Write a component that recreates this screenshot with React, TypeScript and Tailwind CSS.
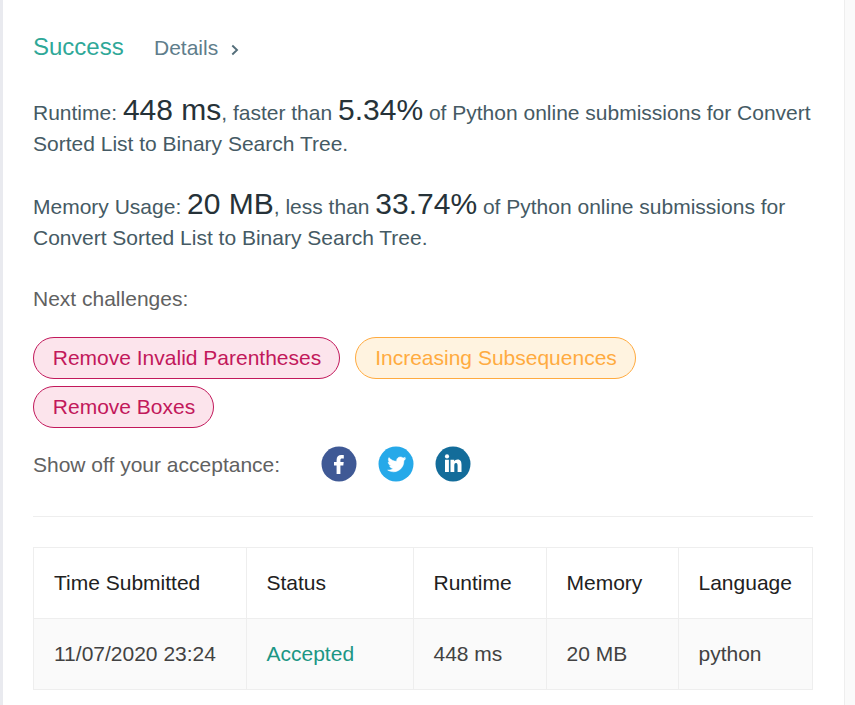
import React from "react";

const font = "font-['Liberation_Sans',Arial,sans-serif]";

function Strong({ children }: { children: React.ReactNode }) {
  return <span className="text-[30px] leading-[30px] text-[#263238]">{children}</span>;
}

function Facebook() {
  return (
    <svg width="36" height="36" viewBox="0 0 36 36">
      <circle cx="18" cy="18" r="17.5" fill="#3f5995" />
      <path d="M15.6 27.9v-8.4H13v-3.6h2.6v-1.8c0-3.3 1.8-5 4.7-5 1.2 0 2.2.1 2.5.1v3.4h-1.6c-1.4 0-1.8.6-1.8 1.6v1.7h3.3l-.4 3.6h-2.9v8.4z" fill="#fff" />
    </svg>
  );
}

function Twitter() {
  return (
    <svg width="36" height="36" viewBox="0 0 36 36">
      <circle cx="18" cy="18" r="17.5" fill="#26a9e9" />
      <path fill="#fff" stroke="#fff" strokeWidth=".5" d="M27.6 12.5c-.6.2-1 .4-1.7.5.6-.4 1.1-1 1.3-1.8-.6.4-1.3.6-2.2.8-2-2.1-6.8-1-6.4 3.3-3-.1-5.7-1.4-7.7-3.7-1.1 2-.4 3.8 1 5-.6 0-1.2-.2-1.7-.5 0 1.9 1.3 3.3 3 3.7-.5.2-1 .2-1.6.1.5 1.5 1.9 2.5 3.6 2.6-1.7 1.3-3.4 1.7-5.5 1.6 7.6 4.7 16.4-.8 16.2-9.4.7-.6 1.3-1.3 1.7-2.2z" />
    </svg>
  );
}

function LinkedIn() {
  return (
    <svg width="36" height="36" viewBox="0 0 36 36">
      <circle cx="18" cy="18" r="17.5" fill="#136c9a" />
      <g fill="#fff">
        <circle cx="12" cy="10.4" r="2.1" />
        <path d="M10 13.8h3.9V26H10zM15.5 13.8h3.7v1.5c.6-.9 1.7-1.8 3.4-1.8 3.2 0 3.9 2.4 3.9 5.3V26h-3.9v-6.1c0-1.3-.1-2.9-1.6-2.9s-1.7 1.4-1.7 2.8V26h-3.8z" />
      </g>
    </svg>
  );
}

const hard = "border-[#c2185b] bg-[#fce4ec] text-[#c2185b]";
const medium = "border-[#ffab40] bg-[#fff3e0] text-[#ffab40]";
const pill = "flex h-[42px] items-center justify-center rounded-full border pl-px";
const headers = ["Time Submitted", "Status", "Runtime", "Memory", "Language"];
const values = ["11/07/2020 23:24", "Accepted", "448 ms", "20 MB", "python"];
const cell = "border border-[#eeeeee] pl-[19.5px] first:pl-5";

export default function App() {
  return (
    <div className={`flex h-[705px] w-[855px] overflow-hidden bg-[#fafafa] text-[21px] ${font}`}>
      <div className="w-[3px] shrink-0 bg-[#e9eaef]" />
      <main className="w-[842px] shrink-0 border-r border-[#eeeeee] bg-white pl-[30px]">
        <div className="flex h-[95px] items-center pb-px">
          <h1 className="w-[121px] text-[24px] text-[#2fa898]">Success</h1>
          <a className="flex items-center pt-[2px] text-[#607d8b]">
            Details
            <svg className="ml-[13px] mt-[3px]" width="8" height="12" viewBox="0 0 8 12" fill="none" stroke="#546e7a" strokeWidth="1.9"><path d="M1.3 1.5L6 6l-4.7 4.5" /></svg>
          </a>
        </div>
        <p className="h-[94px] leading-[31px] text-[#455a64]">
          Runtime: <Strong>448 ms</Strong>, faster than <Strong>5.34%</Strong> of Python online submissions for Convert<br />Sorted List to Binary Search Tree.
        </p>
        <p className="h-[93px] leading-[31px] text-[#455a64]">
          Memory Usage: <Strong>20 MB</Strong>, less than <Strong>33.74%</Strong> of Python online submissions for<br />Convert Sorted List to Binary Search Tree.
        </p>
        <p className="h-[55px] leading-[34px] text-[#616161]">Next challenges:</p>
        <div className="flex w-[780px] flex-wrap gap-x-[15px] gap-y-[7px]">
          <span className={`${pill} w-[307px] ${hard}`}>Remove Invalid Parentheses</span>
          <span className={`${pill} w-[281px] ${medium}`}>Increasing Subsequences</span>
          <span className={`${pill} w-[181px] ${hard}`}>Remove Boxes</span>
        </div>
        <div className="flex h-[89px] w-[780px] items-start border-b border-[#eeeeee] pt-[18px] text-[#616161]">
          <span className="w-[288px] leading-[38px]">Show off your acceptance:</span>
          <div className="flex gap-[21px]"><Facebook /><Twitter /><LinkedIn /></div>
        </div>
        <table className="mt-[30px] w-[779px] table-fixed border-collapse text-left">
          <colgroup><col className="w-[213px]" /><col className="w-[167px]" /><col className="w-[133px]" /><col className="w-[132px]" /><col className="w-[134px]" /></colgroup>
          <thead><tr className="h-[71px] text-[#212121]">{headers.map(h => <th key={h} className={`${cell} font-normal`}>{h}</th>)}</tr></thead>
          <tbody><tr className="h-[71px] bg-[#fafafa] text-[#424242]">{values.map(v => <td key={v} className={`${cell} ${v === "Accepted" ? "text-[#1c9684]" : ""}`}>{v}</td>)}</tr></tbody>
        </table>
      </main>
    </div>
  );
}
